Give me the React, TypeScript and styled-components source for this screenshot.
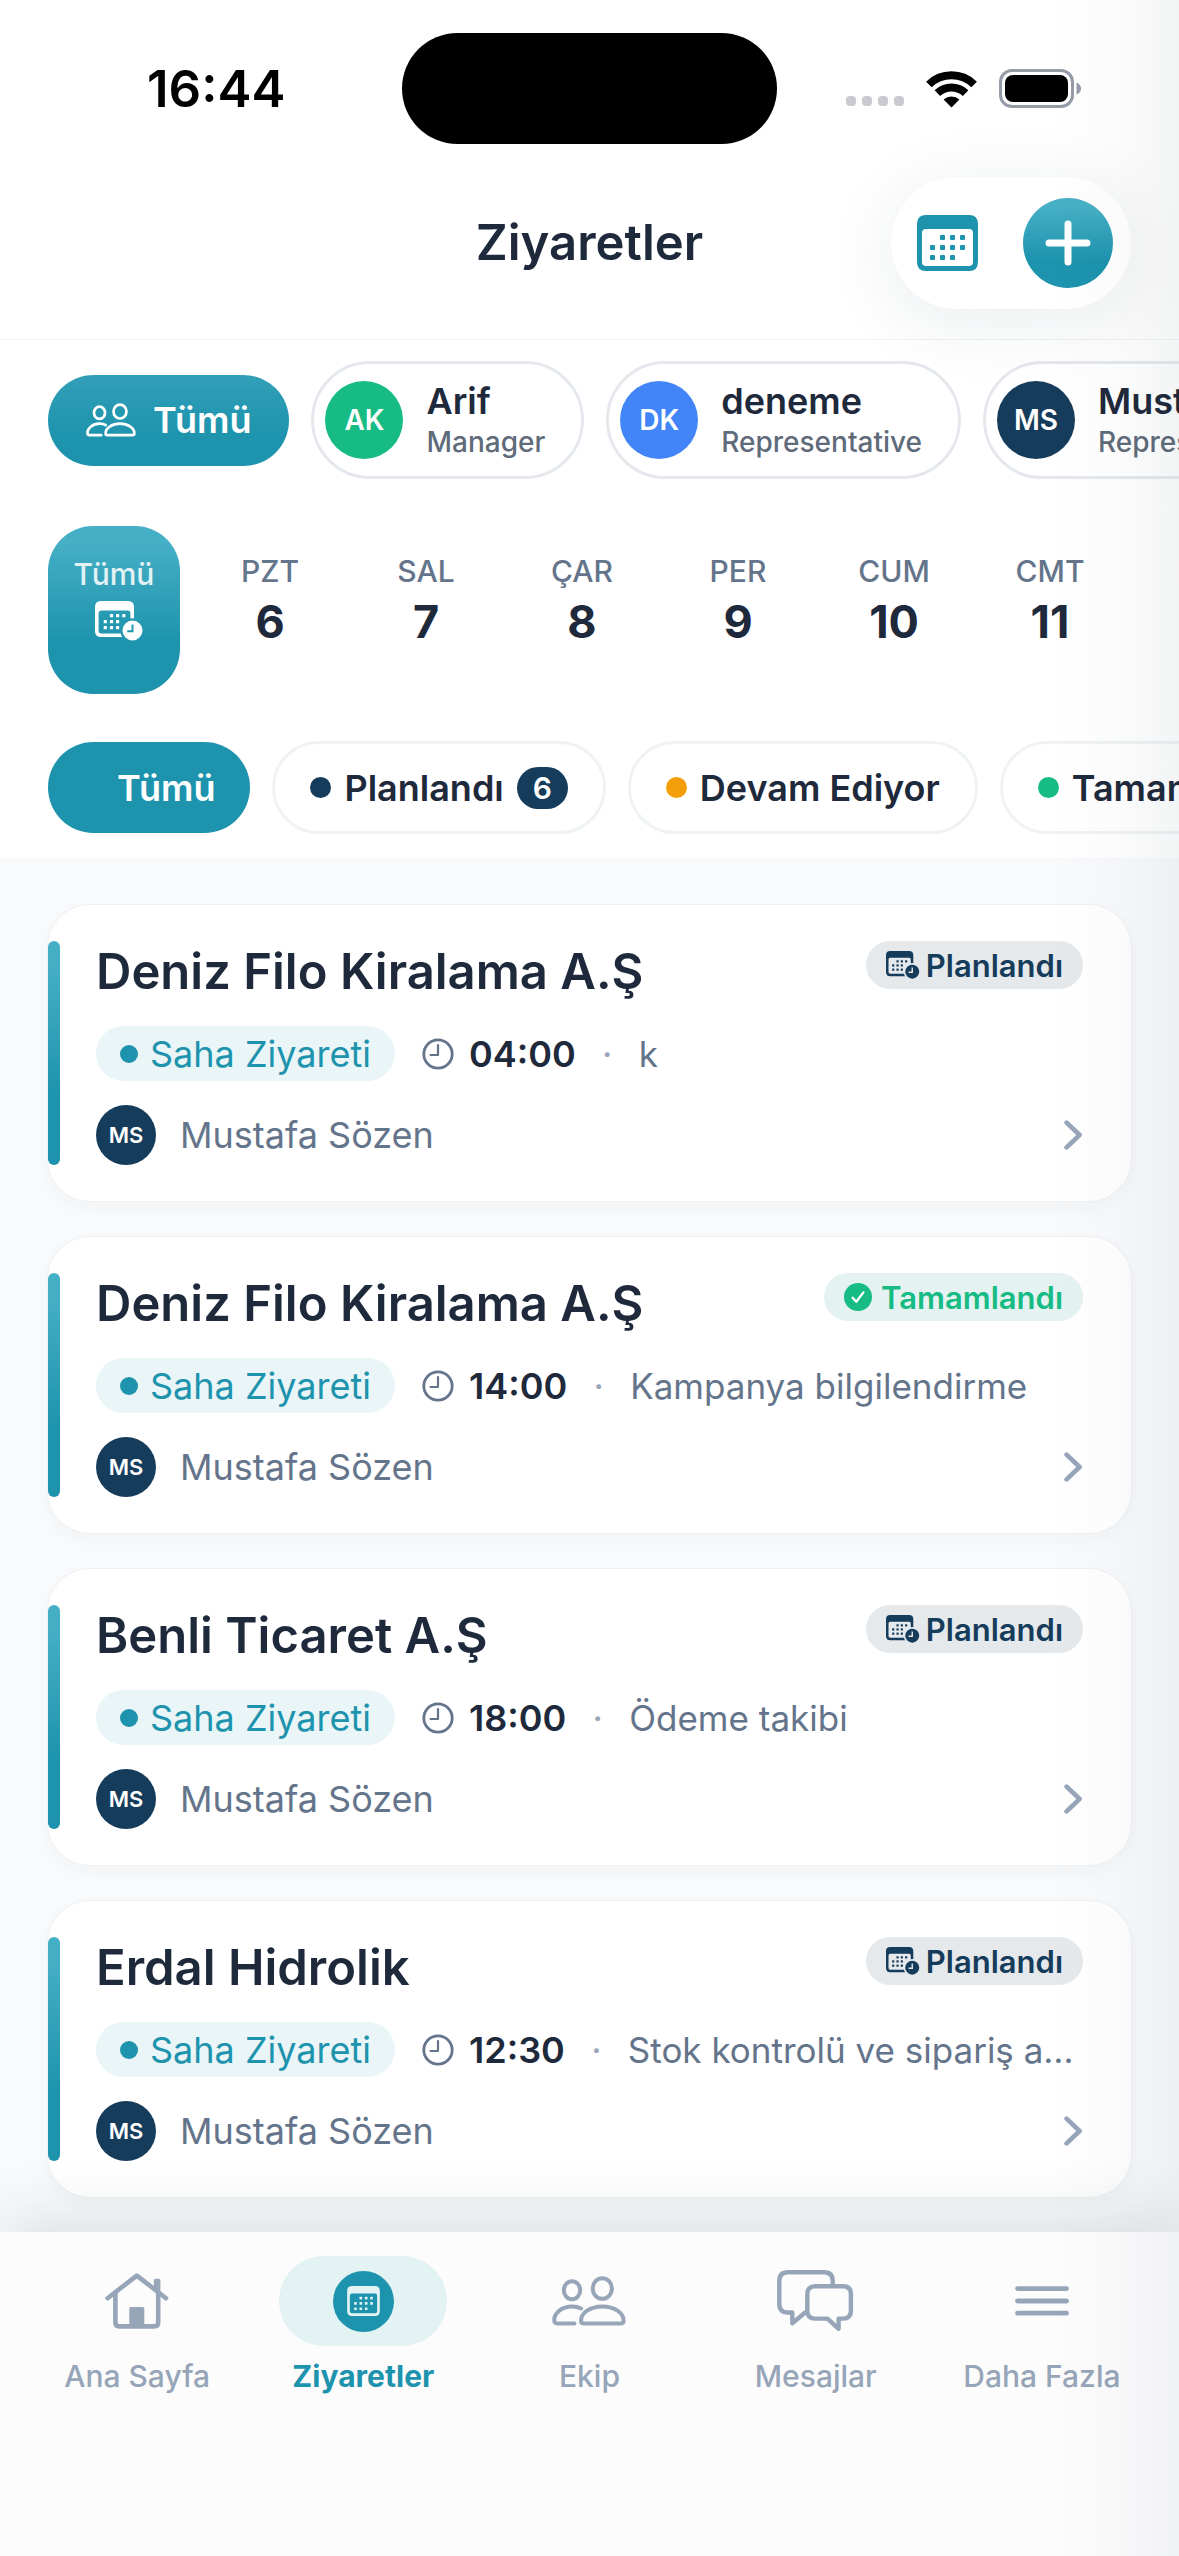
import React, { useId } from "react";
import styled, { createGlobalStyle } from "styled-components";

const color = {
  ink: "#1e293b",
  muted: "#64748b",
  faint: "#97a5b8",
  teal: "#1d93ad",
  tealLight: "#45afc5",
  navy: "#163c5c",
  green: "#17bb84",
  blue: "#4285f9",
  amber: "#f59e0b",
  canvas: "#f9fafc",
};

const GlobalStyle = createGlobalStyle`
  *, *::before, *::after { box-sizing: border-box; }
  body {
    margin: 0;
    background: ${color.canvas};
    color: ${color.ink};
    font-family: Inter, "Noto Sans", sans-serif;
  }
  button {
    margin: 0;
    padding: 0;
    border: 0;
    background: none;
    color: inherit;
    font: inherit;
    cursor: pointer;
  }
  h1, h2, p { margin: 0; }
  a { color: inherit; text-decoration: none; }
  svg { display: block; flex: none; }
`;

/* ---------- icons ---------- */

const CalendarIcon = ({ width = 61, height = 56 }: { width?: number; height?: number }) => (
  <svg width={width} height={height} viewBox="0 0 61 56" fill="currentColor" aria-hidden="true">
    <path
      fillRule="evenodd"
      d="M9 0H52Q61 0 61 9V47Q61 56 52 56H9Q0 56 0 47V9Q0 0 9 0ZM9 14Q5 14 5 18V47Q5 51 9 51H52Q56 51 56 47V18Q56 14 52 14Z"
    />
    {[
      [25, 22], [35, 22], [45, 22],
      [15, 32], [25, 32], [35, 32], [45, 32],
      [15, 42], [25, 42], [35, 42],
    ].map(([x, y]) => (
      <rect key={`${x}-${y}`} x={x - 2} y={y - 2} width="5" height="5" rx="1" />
    ))}
  </svg>
);

/* With `balanced` the box grows on the left so that the calendar itself, not its clock, is centred. */
const CalendarClockIcon = ({ height = 40, balanced = false }: { height?: number; balanced?: boolean }) => {
  const id = useId();
  return (
    <svg height={height} viewBox={balanced ? "-9 0 57 40" : "0 0 48 40"} fill="currentColor" aria-hidden="true">
      <mask id={id}>
        <rect width="48" height="40" fill="#fff" />
        <circle cx="37.5" cy="29.5" r="12.2" fill="#000" />
      </mask>
      <g mask={`url(#${id})`}>
        <path
          fillRule="evenodd"
          d="M6 0H33Q39 0 39 6V30Q39 36 33 36H6Q0 36 0 30V6Q0 0 6 0ZM6 9.5Q3.6 9.5 3.6 12V30Q3.6 32.4 6 32.4H33Q35.4 32.4 35.4 30V12Q35.4 9.5 33 9.5Z"
        />
        {[
          [16.5, 14.7], [22.6, 14.7], [28.8, 14.7],
          [10.3, 20.7], [16.5, 20.7], [22.6, 20.7],
          [10.3, 26.7], [16.5, 26.7], [22.6, 26.7],
        ].map(([x, y]) => (
          <rect key={`${x}-${y}`} x={x - 1.6} y={y - 1.6} width="3.2" height="3.2" rx="0.6" />
        ))}
      </g>
      <path
        fillRule="evenodd"
        d="M37.5 19.5a10 10 0 1 1 0 20a10 10 0 1 1 0-20ZM36.5 23.5V29.3H32.2V31.3H38.5V23.5Z"
      />
    </svg>
  );
};

const PeopleIcon = ({ width = 74, height = 50 }: { width?: number; height?: number }) => (
  <svg
    width={width}
    height={height}
    viewBox="0 0 74 50"
    fill="none"
    stroke="currentColor"
    strokeWidth="4"
    strokeLinecap="round"
    strokeLinejoin="round"
    aria-hidden="true"
  >
    <ellipse cx="20" cy="14.3" rx="8.2" ry="9" />
    <ellipse cx="50.3" cy="12.5" rx="9.6" ry="10.3" />
    <path d="M31.5 47.4C29.8 47.4 29 46.3 29 44.5C29 37 38 30.4 50.3 30.4S71.6 37 71.6 44.5C71.6 46.3 70.8 47.4 69 47.4Z" />
    <path d="M22.5 47.4H5C3 47.4 2.2 46.3 2.2 44C2.2 37 10 30.4 20 30.4C23.5 30.4 26.5 31 29 32.4" />
  </svg>
);

const HomeIcon = () => (
  <svg width="64" height="56" viewBox="0 0 64 56" fill="none" stroke="currentColor" strokeWidth="4.6" strokeLinecap="round" strokeLinejoin="round" aria-hidden="true">
    <path d="M2.6 25.2L31.8 2.6L61 25.2" />
    <path d="M10.4 20V49.5Q10.4 53.4 14.3 53.4H49.3Q53.2 53.4 53.2 49.5V20" />
    <path d="M24.3 35.5Q24.3 34 25.8 34H37.8Q39.3 34 39.3 35.5V53H24.3ZM48.8 7.6Q48.8 5.8 50.6 5.8H53.6Q55.4 5.8 55.4 7.6V21L48.8 16Z" fill="currentColor" stroke="none" />
  </svg>
);

const ChatIcon = () => (
  <svg width="77" height="62" viewBox="0 0 77 62" fill="none" stroke="currentColor" strokeWidth="4.4" strokeLinecap="round" strokeLinejoin="round" aria-hidden="true">
    <path d="M55.7 14.5V11Q55.7 2.3 47 2.3H11Q2.3 2.3 2.3 11V34Q2.3 42.5 11 42.5H15.3V53.3L28.5 42.3" />
    <path d="M38 16.3H66Q73.9 16.3 73.9 24V41Q73.9 48.6 66 48.6H61.6V58.8L50.5 48.6H38Q30.3 48.6 30.3 41V24Q30.3 16.3 38 16.3Z" />
  </svg>
);

const MenuIcon = () => (
  <svg width="54" height="30" viewBox="0 0 54 30" stroke="currentColor" strokeWidth="4.8" strokeLinecap="round" aria-hidden="true">
    <path d="M2.5 2.6H51.5M2.5 15H51.5M2.5 27.2H51.5" />
  </svg>
);

const PlusIcon = () => (
  <svg width="46" height="46" viewBox="0 0 46 46" stroke="currentColor" strokeWidth="7" strokeLinecap="round" aria-hidden="true">
    <path d="M23 4V42M4 23H42" />
  </svg>
);

const ClockIcon = () => (
  <svg width="32" height="32" viewBox="0 0 32 32" fill="none" stroke="currentColor" strokeWidth="2.8" strokeLinecap="round" strokeLinejoin="round" aria-hidden="true">
    <circle cx="16" cy="16" r="14.2" />
    <path d="M16 7V17H8.5" strokeWidth="2.2" />
  </svg>
);

const CheckIcon = () => (
  <svg width="28" height="28" viewBox="0 0 28 28" fill="none" aria-hidden="true">
    <circle cx="14" cy="14" r="14" fill="currentColor" />
    <path d="M8.6 14.8L12.3 18.8L19.4 9.4" stroke="#fff" strokeWidth="2.3" strokeLinecap="round" strokeLinejoin="round" />
  </svg>
);

const ChevronIcon = () => (
  <svg width="19" height="30" viewBox="0 0 19 30" fill="none" stroke="currentColor" strokeWidth="4.6" strokeLinecap="round" strokeLinejoin="round" aria-hidden="true">
    <path d="M2.6 2.6L15.6 15L2.6 27.4" />
  </svg>
);

const WifiIcon = () => (
  <svg width="51" height="38" viewBox="0 0 51 38" fill="none" stroke="currentColor" aria-hidden="true">
    <path d="M2.9 14.5A32.5 32.5 0 0 1 48.1 14.5" strokeWidth="8" />
    <path d="M11.4 23.2A20.4 20.4 0 0 1 39.6 23.2" strokeWidth="8" />
    <path d="M25.5 37.6L17.6 29.4A12 12 0 0 1 33.4 29.4Z" fill="currentColor" stroke="none" />
  </svg>
);

const BatteryIcon = () => (
  <svg width="82" height="39" viewBox="0 0 82 39" fill="none" aria-hidden="true">
    <rect x="1.5" y="1.5" width="72" height="36" rx="11.5" stroke="#959ca8" strokeWidth="3" />
    <rect x="6" y="6" width="63" height="27" rx="8" fill="#000" />
    <path d="M77.5 13.5Q82 15.5 82 19.5T77.5 25.5Z" fill="#959ca8" />
  </svg>
);

/* ---------- frame ---------- */

const Screen = styled.div`
  position: relative;
  display: flex;
  flex-direction: column;
  min-height: 100vh;
  overflow: hidden;
`;

const EdgeShade = styled.div`
  position: absolute;
  inset: 0 0 0 auto;
  z-index: 5;
  width: 132px;
  pointer-events: none;
  background: linear-gradient(to right, rgba(22, 44, 60, 0), rgba(22, 44, 60, 0.014) 50%, rgba(22, 44, 60, 0.05));
`;

const Header = styled.header`
  position: relative;
  z-index: 2;
  border-bottom: 1px solid #f0f2f4;
`;

const StatusBar = styled.div`
  display: grid;
  grid-template-columns: 1fr auto 1fr;
  align-items: center;
  padding: 33px 98px 33px 147px;
  color: #000;
`;

const Time = styled.span`
  font-size: 51px;
  font-weight: 600;
  line-height: 60px;
`;

const Island = styled.div`
  width: 375px;
  height: 111px;
  margin-left: -49px;
  border-radius: 56px;
  background: #000;
`;

const StatusIcons = styled.div`
  display: flex;
  align-items: flex-end;
  justify-content: flex-end;
  gap: 22px;
`;

const SignalDots = styled.div`
  display: flex;
  gap: 6px;
  padding-bottom: 2px;
`;

const SignalDot = styled.span`
  width: 10px;
  height: 10px;
  border-radius: 4px;
  background: #c9cad0;
`;

const TitleBar = styled.div`
  display: grid;
  grid-template-columns: 1fr auto 1fr;
  align-items: center;
  padding: 0 48px 30px;
`;

const Title = styled.h1`
  grid-column: 2;
  font-size: 49px;
  font-weight: 600;
  line-height: 60px;
`;

const Actions = styled.div`
  justify-self: end;
  display: flex;
  align-items: center;
  gap: 45px;
  height: 132px;
  padding: 0 18px 0 26px;
  border-radius: 66px;
  background: #fff;
  box-shadow: 0 12px 72px rgba(22, 44, 60, 0.09);
`;

const PlainButton = styled.button`
  color: ${color.teal};
`;

const AddButton = styled.button`
  display: grid;
  place-items: center;
  width: 90px;
  height: 90px;
  border-radius: 50%;
  background: linear-gradient(${color.tealLight} 10%, ${color.teal} 70%);
  color: #fff;
`;

/* ---------- filters ---------- */

const Filters = styled.section`
  display: flex;
  flex-direction: column;
  gap: 47px;
  padding: 21px 0 23px;
`;

const Paper = styled.div`
  background: #fff;
`;

const Strip = styled.div<{ $gap: number }>`
  display: flex;
  align-items: center;
  gap: ${(p) => p.$gap}px;
  padding: 0 48px;
  overflow-x: auto;
  scrollbar-width: none;
`;

const AllPeople = styled.button`
  display: flex;
  flex: none;
  align-items: center;
  gap: 17px;
  height: 91px;
  padding: 0 38px;
  border-radius: 46px;
  background: linear-gradient(#319fb7, ${color.teal} 70%);
  color: #fff;
  font-size: 36px;
  font-weight: 600;
`;

const PersonChip = styled.button`
  display: flex;
  flex: none;
  align-items: center;
  gap: 23px;
  height: 118px;
  padding: 0 36px 0 11px;
  border: 3px solid #e5e9ed;
  border-radius: 59px;
  background: #fff;
  text-align: left;
`;

const Avatar = styled.span<{ $color: string; $size: number; $font: number }>`
  display: grid;
  flex: none;
  place-items: center;
  width: ${(p) => p.$size}px;
  height: ${(p) => p.$size}px;
  border-radius: 50%;
  background: ${(p) => p.$color};
  color: #fff;
  font-size: ${(p) => p.$font}px;
  font-weight: 600;
`;

const PersonText = styled.span`
  display: flex;
  flex-direction: column;
`;

const PersonName = styled.span`
  font-size: 36px;
  font-weight: 600;
  line-height: 44px;
`;

const PersonRole = styled.span`
  color: #5f6b7a;
  font-size: 28px;
  font-weight: 500;
  line-height: 38px;
`;

const DayTile = styled.button<{ $active?: boolean }>`
  display: flex;
  flex: none;
  flex-direction: column;
  align-items: center;
  gap: 9px;
  width: 132px;
  height: 168px;
  padding-top: ${(p) => (p.$active ? 30 : 27)}px;
  border-radius: 45px;
  background: ${(p) => (p.$active ? `linear-gradient(${color.tealLight} 10%, ${color.teal} 70%)` : "none")};
  color: ${(p) => (p.$active ? "#fff" : color.ink)};
`;

const DayName = styled.span<{ $active?: boolean }>`
  color: ${(p) => (p.$active ? "#e3f2f5" : color.muted)};
  font-size: 30px;
  font-weight: 500;
  line-height: 36px;
`;

const DayNumber = styled.span`
  font-size: 45px;
  font-weight: 700;
  line-height: 48px;
`;

const StatusChip = styled.button<{ $active?: boolean }>`
  display: flex;
  flex: none;
  align-items: center;
  gap: 13px;
  height: ${(p) => (p.$active ? 91 : 93)}px;
  padding: 0 35px;
  border: ${(p) => (p.$active ? "0" : "3px solid #f0f3f5")};
  border-radius: 47px;
  background: ${(p) => (p.$active ? color.teal : "#fff")};
  color: ${(p) => (p.$active ? "#fff" : color.ink)};
  font-size: 36px;
  font-weight: 600;
`;

const Dot = styled.span<{ $color: string; $size: number }>`
  flex: none;
  width: ${(p) => p.$size}px;
  height: ${(p) => p.$size}px;
  border-radius: 50%;
  background: ${(p) => p.$color};
`;

const Count = styled.span`
  min-width: 51px;
  border-radius: 21px;
  background: ${color.navy};
  color: #fff;
  font-size: 30px;
  line-height: 42px;
  text-align: center;
`;

/* ---------- visits ---------- */

const VisitList = styled.main`
  display: flex;
  flex: 1;
  flex-direction: column;
  gap: 36px;
  padding: 48px 48px 24px;
`;

const Card = styled.article`
  position: relative;
  display: flex;
  flex-direction: column;
  gap: 24px;
  padding: 36px 48px;
  border-radius: 42px;
  background: #fff;
  box-shadow: 0 0 0 1px #eff1f3, 0 6px 18px rgba(22, 44, 60, 0.04);

  &::before {
    content: "";
    position: absolute;
    inset: 36px auto 36px 0;
    width: 12px;
    border-radius: 6px;
    background: linear-gradient(${color.tealLight} 10%, ${color.teal} 70%);
  }
`;

const CardTop = styled.div`
  display: flex;
  align-items: flex-start;
  justify-content: space-between;
  height: 61px;
`;

const Customer = styled.h2`
  font-size: 49px;
  font-weight: 600;
  line-height: 61px;
`;

const Badge = styled.span<{ $done: boolean }>`
  display: flex;
  align-items: center;
  gap: ${(p) => (p.$done ? 9 : 6)}px;
  height: 48px;
  padding: 0 20px;
  border-radius: 24px;
  background: ${(p) => (p.$done ? "#e4f3f2" : "#e5e9ec")};
  color: ${(p) => (p.$done ? color.green : color.navy)};
  font-size: 31px;
  font-weight: 600;
`;

const Details = styled.div`
  display: flex;
  align-items: center;
  height: 55px;
  font-size: 36px;
`;

const TypeTag = styled.span`
  display: flex;
  flex: none;
  align-items: center;
  gap: 12px;
  height: 55px;
  margin-right: 27px;
  padding: 0 24px;
  border-radius: 28px;
  background: #eaf5f8;
  color: ${color.teal};
`;

const Hour = styled.span`
  display: flex;
  flex: none;
  align-items: center;
  gap: 15px;
  color: ${color.muted};
`;

const HourText = styled.time`
  color: ${color.ink};
  font-weight: 600;
`;

const Separator = styled.span`
  flex: none;
  width: 63px;
  color: ${color.faint};
  text-align: center;
`;

const Note = styled.p`
  min-width: 0;
  overflow: hidden;
  color: ${color.muted};
  font-size: 35px;
  text-overflow: ellipsis;
  white-space: nowrap;
`;

const Owner = styled.div`
  display: flex;
  align-items: center;
  gap: 24px;
  color: ${color.muted};
  font-size: 36px;
`;

const OpenButton = styled.button`
  margin-left: auto;
  color: ${color.faint};
`;

/* ---------- tab bar ---------- */

const TabBar = styled.nav`
  position: relative;
  z-index: 3;
  display: grid;
  grid-template-columns: repeat(5, 1fr);
  padding: 24px 24px 162px;
  background: #fcfcfd;
  box-shadow: 0 -12px 60px rgba(22, 44, 60, 0.13);
`;

const Tab = styled.a<{ $active?: boolean }>`
  display: flex;
  flex-direction: column;
  align-items: center;
  gap: 12px;
  color: ${(p) => (p.$active ? color.teal : color.faint)};
  font-size: 30px;
  font-weight: ${(p) => (p.$active ? 700 : 500)};
  line-height: 36px;
  white-space: nowrap;
`;

const TabIcon = styled.span<{ $active?: boolean }>`
  display: grid;
  place-items: center;
  width: 168px;
  height: 90px;
  border-radius: 45px;
  background: ${(p) => (p.$active ? "#e3f2f2" : "none")};
`;

const TabDisc = styled.span`
  display: grid;
  place-items: center;
  width: 61px;
  height: 61px;
  border-radius: 50%;
  background: ${color.teal};
  color: #e3f2f2;
`;

/* ---------- data ---------- */

const people = [
  { initials: "AK", name: "Arif", role: "Manager", color: color.green },
  { initials: "DK", name: "deneme", role: "Representative", color: color.blue },
  { initials: "MS", name: "Mustafa", role: "Representative", color: color.navy },
];

const days = [
  ["PZT", "6"], ["SAL", "7"], ["ÇAR", "8"], ["PER", "9"], ["CUM", "10"], ["CMT", "11"], ["PAZ", "12"],
];

const statuses = [
  { label: "Planlandı", color: color.navy, count: 6 },
  { label: "Devam Ediyor", color: color.amber },
  { label: "Tamamlandı", color: color.green },
];

const visits = [
  { customer: "Deniz Filo Kiralama A.Ş", time: "04:00", note: "k", done: false },
  { customer: "Deniz Filo Kiralama A.Ş", time: "14:00", note: "Kampanya bilgilendirme", done: true },
  { customer: "Benli Ticaret A.Ş", time: "18:00", note: "Ödeme takibi", done: false },
  { customer: "Erdal Hidrolik", time: "12:30", note: "Stok kontrolü ve sipariş amaçlı", done: false },
];

const tabs = [
  { label: "Ana Sayfa", icon: <HomeIcon /> },
  { label: "Ziyaretler", active: true, icon: <TabDisc><CalendarIcon width={33} height={30} /></TabDisc> },
  { label: "Ekip", icon: <PeopleIcon /> },
  { label: "Mesajlar", icon: <ChatIcon /> },
  { label: "Daha Fazla", icon: <MenuIcon /> },
];

export default function App() {
  return (
    <Screen>
      <GlobalStyle />
      <Paper>
        <Header>
          <StatusBar>
            <Time>16:44</Time>
            <Island />
            <StatusIcons>
              <SignalDots>
                <SignalDot /><SignalDot /><SignalDot /><SignalDot />
              </SignalDots>
              <WifiIcon />
              <BatteryIcon />
            </StatusIcons>
          </StatusBar>
          <TitleBar>
            <Title>Ziyaretler</Title>
            <Actions>
              <PlainButton aria-label="Takvim"><CalendarIcon /></PlainButton>
              <AddButton aria-label="Ziyaret ekle"><PlusIcon /></AddButton>
            </Actions>
          </TitleBar>
        </Header>

        <Filters>
          <Strip $gap={22}>
            <AllPeople>
              <PeopleIcon width={50} height={34} />
              Tümü
            </AllPeople>
            {people.map((p) => (
              <PersonChip key={p.initials}>
                <Avatar $color={p.color} $size={78} $font={28}>{p.initials}</Avatar>
                <PersonText>
                  <PersonName>{p.name}</PersonName>
                  <PersonRole>{p.role}</PersonRole>
                </PersonText>
              </PersonChip>
            ))}
          </Strip>

          <Strip $gap={24}>
            <DayTile $active>
              <DayName $active>Tümü</DayName>
              <CalendarClockIcon balanced />
            </DayTile>
            {days.map(([name, number]) => (
              <DayTile key={name}>
                <DayName>{name}</DayName>
                <DayNumber>{number}</DayNumber>
              </DayTile>
            ))}
          </Strip>

          <Strip $gap={22}>
            <StatusChip $active>
              <Dot $color="transparent" $size={21} />
              Tümü
            </StatusChip>
            {statuses.map((s) => (
              <StatusChip key={s.label}>
                <Dot $color={s.color} $size={21} />
                {s.label}
                {s.count && <Count>{s.count}</Count>}
              </StatusChip>
            ))}
          </Strip>
        </Filters>
      </Paper>

      <VisitList>
        {visits.map((v) => (
          <Card key={v.time}>
            <CardTop>
              <Customer>{v.customer}</Customer>
              <Badge $done={v.done}>
                {v.done ? <CheckIcon /> : <CalendarClockIcon height={28} />}
                {v.done ? "Tamamlandı" : "Planlandı"}
              </Badge>
            </CardTop>
            <Details>
              <TypeTag>
                <Dot $color={color.teal} $size={18} />
                Saha Ziyareti
              </TypeTag>
              <Hour>
                <ClockIcon />
                <HourText>{v.time}</HourText>
              </Hour>
              <Separator>·</Separator>
              <Note>{v.note}</Note>
            </Details>
            <Owner>
              <Avatar $color={color.navy} $size={60} $font={22}>MS</Avatar>
              Mustafa Sözen
              <OpenButton aria-label="Ziyareti aç"><ChevronIcon /></OpenButton>
            </Owner>
          </Card>
        ))}
      </VisitList>

      <TabBar>
        {tabs.map((t) => (
          <Tab key={t.label} href="#" $active={t.active}>
            <TabIcon $active={t.active}>{t.icon}</TabIcon>
            {t.label}
          </Tab>
        ))}
      </TabBar>
      <EdgeShade />
    </Screen>
  );
}
